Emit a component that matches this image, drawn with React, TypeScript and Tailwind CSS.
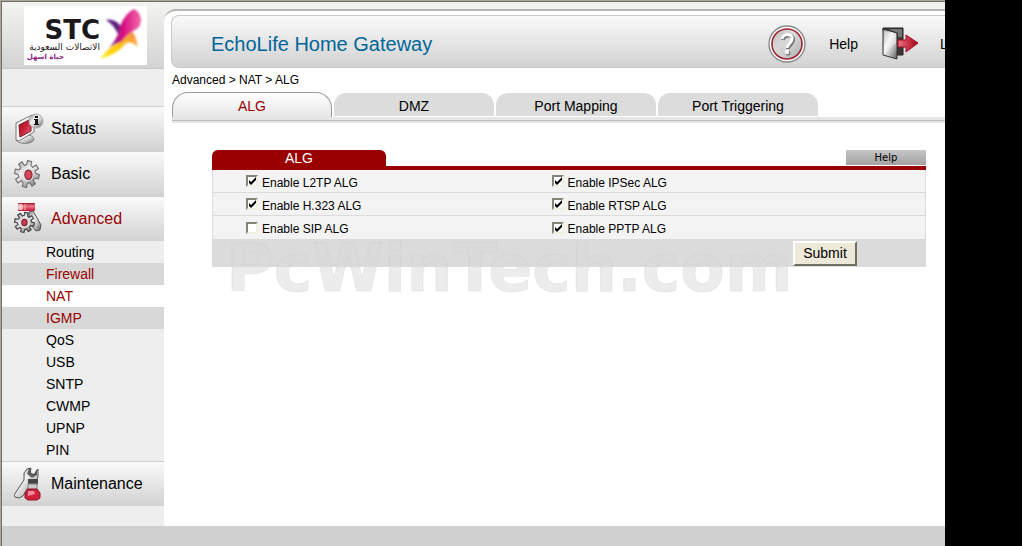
import { ReactNode } from "react";
import clsx from "clsx";


const subItems = [
  { name: "Routing" },
  { name: "Firewall", style: "bg-[#d8d8d8] text-[#990000]" },
  { name: "NAT", style: "bg-white text-[#990000]" },
  { name: "IGMP", style: "bg-[#d8d8d8] text-[#990000]" },
  { name: "QoS" },
  { name: "USB" },
  { name: "SNTP" },
  { name: "CWMP" },
  { name: "UPNP" },
  { name: "PIN" }
];

const tabs = ["DMZ", "Port Mapping", "Port Triggering"];

const algRows = [
  [{ name: "L2TP", on: true }, { name: "IPSec", on: true }],
  [{ name: "H.323", on: true }, { name: "RTSP", on: true }],
  [{ name: "SIP", on: false }, { name: "PPTP", on: true }]
];

const GEAR = "M30 15 35 15 35 21 30 21 28 24 32 28 28 32 24 28 21 30 21 35 15 35 15 30 12 28 8 32 4 28 8 24 6 21 1 21 1 15 6 15 8 12 4 8 8 4 12 8 15 6 15 1 21 1 21 6 24 8 28 4 32 8 28 12z";


// shared metal / red shading used by all of the icons
function Gradients() {
  return (
    <svg width="0" height="0" className="absolute" aria-hidden="true">
      <defs>
        <linearGradient id="metal" x1="0" y1="0" x2="1" y2="1">
          <stop offset="0" stopColor="#8e8e8e" />
          <stop offset="0.4" stopColor="#f2f2f2" />
          <stop offset="0.65" stopColor="#c2c2c2" />
          <stop offset="1" stopColor="#5a5a5a" />
        </linearGradient>
        <linearGradient id="ruby" x1="0" y1="0" x2="1" y2="1">
          <stop offset="0" stopColor="#8f0d1c" />
          <stop offset="0.55" stopColor="#d0263f" />
          <stop offset="1" stopColor="#ee8594" />
        </linearGradient>
        <linearGradient id="tube" x1="0" y1="0" x2="0" y2="1">
          <stop offset="0" stopColor="#a01525" />
          <stop offset="0.4" stopColor="#f0798c" />
          <stop offset="1" stopColor="#c4112d" />
        </linearGradient>
        <linearGradient id="arrow" x1="0" y1="0" x2="1" y2="0">
          <stop offset="0" stopColor="#ee6f84" />
          <stop offset="1" stopColor="#a40012" />
        </linearGradient>
        <linearGradient id="wing" x1="0" y1="0" x2="1" y2="0">
          <stop offset="0" stopColor="#5b2382" />
          <stop offset="0.5" stopColor="#d80f83" />
          <stop offset="1" stopColor="#f06aa8" />
        </linearGradient>
        <linearGradient id="tail" x1="0" y1="1" x2="1" y2="0">
          <stop offset="0" stopColor="#ffee20" />
          <stop offset="0.5" stopColor="#fdc30c" />
          <stop offset="1" stopColor="#f58a5c" />
        </linearGradient>
        <filter id="soft"><feGaussianBlur stdDeviation="1.1" /></filter>
      </defs>
    </svg>
  );
}

function StatusIcon() {
  return (
    <svg width="30" height="32" viewBox="0 0 30 32" aria-hidden="true">
      <ellipse cx="11" cy="26" rx="9" ry="4.5" fill="url(#metal)" stroke="#888" />
      <path d="M2 10 18 2l2 1v16L5 28l-3-1z" fill="#f4f4f4" stroke="#777" />
      <path d="M5 12 17 6v12L6 24z" fill="url(#ruby)" stroke="#7d1420" />
      <circle cx="22" cy="8" r="7" fill="url(#metal)" stroke="#aaa" />
      <path d="M21 3h3v2h-3zM20 6h4v5h1v1h-5v-1h1V7h-1z" fill="#151515" />
    </svg>
  );
}

function BasicIcon() {
  return (
    <svg width="26" height="28" viewBox="0 0 36 36" preserveAspectRatio="none" aria-hidden="true">
      <path d={GEAR} fill="url(#metal)" stroke="#707070" strokeWidth="1.5" strokeLinejoin="round" transform="rotate(12 18 18)" />
      <circle cx="19" cy="19" r="8" fill="#e4e4e4" />
      <ellipse cx="20" cy="19" rx="5" ry="6" fill="#d7485a" stroke="#7c2430" strokeWidth="1.5" />
    </svg>
  );
}

function AdvancedIcon() {
  return (
    <svg width="28" height="32" viewBox="0 0 28 32" aria-hidden="true">
      <path d="m15 9 4-1 4 7 4 7-1 5-4 1-4-5-3-7z" fill="url(#metal)" stroke="#555" />
      <g transform="translate(0 9) scale(.58)">
        <path d={GEAR} fill="url(#metal)" stroke="#444" strokeWidth="2" strokeLinejoin="round" transform="rotate(12 18 18)" />
        <circle cx="18" cy="18" r="9" fill="#ddd" />
        <ellipse cx="18" cy="18" rx="4.5" ry="5.5" fill="#cf3a4e" stroke="#7c2430" strokeWidth="2" />
      </g>
      <rect x="4" y="0" width="17" height="8" rx="1" fill="url(#tube)" />
      <rect x="4" y="1" width="5" height="6" rx="2" fill="#f9c3cc" />
      <path d="M11 1v6" stroke="#f6b4be" />
    </svg>
  );
}

function MaintenanceIcon() {
  return (
    <svg width="28" height="34" viewBox="2 0 28 34" aria-hidden="true">
      <path d="m2 28 10-15V6l3-4 4-1-1 5 4 2 4-6v8l-3 6-5 1-7 12-4 2-4-1z" fill="url(#metal)" stroke="#555" />
      <path d="m17 1 2 1v4l3 1 3-5v6l-5 3-5-4z" fill="#444" opacity=".8" />
      <path d="M16 12h10v5l-2 2h-6l-2-2z" fill="#444" />
      <rect x="16" y="17" width="9" height="6" fill="#c9c9c9" stroke="#888" />
      <path d="M16 22h9l3 4v5l-3 2H16l-3-2v-5z" fill="#d0203c" stroke="#8d1424" />
      <path d="M16 24h6l1 3-7 2z" fill="#f08c9c" />
    </svg>
  );
}

function HelpIcon() {
  return (
    <svg width="38" height="38" viewBox="0 0 38 38" aria-hidden="true">
      <circle cx="19" cy="19" r="18" fill="#fff" stroke="#8a8a8a" strokeWidth="1.4" />
      <circle cx="19" cy="19" r="15" fill="url(#metal)" stroke="#a3242d" strokeWidth="1.6" />
      <circle cx="19" cy="19" r="14" fill="#cecece" opacity=".7" />
      <path d="M14 14c1-6 11-6 10 0 0 4-5 5-5 9" fill="none" stroke="#777" strokeWidth="4" transform="translate(1 1)" />
      <path d="M14 14c1-6 11-6 10 0 0 4-5 5-5 9" fill="none" stroke="#fff" strokeWidth="3" />
      <circle cx="20" cy="28" r="2.5" fill="#777" />
      <circle cx="19" cy="27" r="2.2" fill="#fff" />
    </svg>
  );
}

function LogoutIcon() {
  return (
    <svg width="37" height="33" viewBox="0 0 37 33" aria-hidden="true">
      <path d="M1 1h20v27h-8V8L1 4z" fill="#3a3536" stroke="#222" />
      <path d="M6 2h14v8h-4V6z" fill="#777" />
      <path d="m1 2 14 4v26L1 28z" fill="url(#metal)" stroke="#333" />
      <path d="m2 4 12 4v8L2 27z" fill="#fff" opacity=".4" />
      <path d="M16 13h8V8l12 8-12 9v-5h-8z" fill="url(#arrow)" stroke="#a31022" />
    </svg>
  );
}

function Logo() {
  return (
    <div className="ml-[22px] mt-1 flex h-[59px] w-[123px] bg-white">
      <div className="flex w-[76px] shrink-0 flex-col items-end pt-[13px] font-['DejaVu_Sans'] text-[#1c1718]">
        <div className="text-[26px]/[22px] font-bold">STC</div>
        <div dir="rtl" lang="ar" className="mt-px whitespace-nowrap text-[9px]/[10px]">الاتصالات السعودية</div>
        <div dir="rtl" lang="ar" className="mr-9 mt-px whitespace-nowrap text-[7px]/[8px] font-bold text-[#8a2383]">حياة اسهل</div>
      </div>
      <svg width="46" height="59" viewBox="0 0 46 59" aria-hidden="true">
        <g filter="url(#soft)">
          <path d="M6 14c5-2 14 2 17 10l-2 12C18 26 14 19 6 14z" fill="#5b2382" />
          <path d="M20 21c3-9 8-15 14-18 7 3 9 12 5 18-5 4-10 5-15 15-7 1-13 3-19 10 7-7 13-14 15-25z" fill="url(#wing)" />
          <path d="M0 53c6-7 11-14 21-17 4-4 7-9 11-10 3 1 4 8 6 15-4-4-8-6-13-3-6 8-15 12-25 15z" fill="url(#tail)" />
        </g>
      </svg>
    </div>
  );
}

function MenuItem({ icon, name, active }: { icon: ReactNode; name: string; active?: boolean }) {
  return (
    <a href="#" className={clsx("flex h-[45px] items-center border-t border-[#cfcfcf] bg-linear-to-b from-[#fafafa] to-[#d2d2d2] text-base", active && "text-[#990000]")}>
      <span className="w-[49px] shrink-0 pl-3">{icon}</span>
      {name}
    </a>
  );
}

function Checkbox({ name, on }: { name: string; on: boolean }) {
  return (
    <label className="flex items-center gap-1">
      <span className="grid size-3">
        <input
          type="checkbox"
          defaultChecked={on}
          className="peer col-start-1 row-start-1 size-3 appearance-none border-2 border-b-[#f1efe2] border-l-[#85827a] border-r-[#f1efe2] border-t-[#85827a] bg-white"
        />
        <svg viewBox="0 0 12 12" className="pointer-events-none invisible col-start-1 row-start-1 size-3 peer-checked:visible">
          <path d="M3 5v3l2 2 5-5V2L5 7z" fill="#000" />
        </svg>
      </span>
      <span className="pt-[3px]">Enable {name} ALG</span>
    </label>
  );
}

function Sidebar() {
  return (
    <nav className="w-[162px] shrink-0 bg-[#eeeeee]">
      <div className="h-[67px] overflow-hidden border-b border-[#c8c8c8] bg-linear-to-b from-[#f3f3f1] to-[#d3d3d3]">
        <Logo />
      </div>
      <div className="mt-[37px]">
        <MenuItem icon={<StatusIcon />} name="Status" />
        <MenuItem icon={<BasicIcon />} name="Basic" />
        <MenuItem icon={<AdvancedIcon />} name="Advanced" active />
        <ul className="text-sm">
          {subItems.map((item) => (
            <li key={item.name}>
              <a href="#" className={clsx("block h-[22px] pl-11 leading-[22px]", item.style)}>{item.name}</a>
            </li>
          ))}
        </ul>
        <MenuItem icon={<MaintenanceIcon />} name="Maintenance" />
      </div>
    </nav>
  );
}

function Header() {
  return (
    <header className="ml-[7px] flex h-[53px] items-center rounded-l-lg border-y border-l border-[#c9c9c9] bg-linear-to-b from-[#fafafa] to-[#d2d2d2] pt-1 text-sm">
      <h1 className="flex-1 pl-[39px] text-xl text-[#006699]">EchoLife Home Gateway</h1>
      <a href="#" className="flex items-center gap-[23px]"><HelpIcon />Help</a>
      <a href="#" className="ml-6 flex w-[63px] items-center gap-[21px] overflow-hidden">
        <span className="shrink-0"><LogoutIcon /></span>
        Logout
      </a>
    </header>
  );
}

function AlgForm() {
  return (
    <form className="relative ml-12 mr-[19px] mt-[27px] text-xs">
      <div className="flex items-start justify-between border-b-4 border-[#990000]">
        <h2 className="h-4 w-[174px] rounded-t-md bg-[#990000] text-center text-sm/[16px] text-white">ALG</h2>
        <button type="button" className="h-[15px] w-20 bg-linear-to-b from-[#c6c6c6] to-[#a2a2a2] font-['DejaVu_Sans'] text-[10px]/[15px]">Help</button>
      </div>
      <div className="divide-y divide-[#dbdbdb] border-x border-[#dbdbdb] bg-[#f3f3f3]">
        {algRows.map((row) => (
          <div key={row[0].name} className="grid h-[23px] grid-cols-[9fr_11fr] items-center pl-[33px]">
            {row.map((item) => <Checkbox key={item.name} {...item} />)}
          </div>
        ))}
      </div>
      <div className="flex h-7 items-center justify-end bg-[#dbdbdb] pr-[69px]">
        <button type="button" className="h-[25px] w-16 border-2 border-b-[#716f64] border-l-white border-r-[#716f64] border-t-white bg-[#ece9d8] text-sm/[20px]">Submit</button>
      </div>
      <div className="pointer-events-none absolute left-3.5 top-[77px] whitespace-nowrap font-['DejaVu_Sans'] text-[65px]/[84px] font-bold text-[#dadada]/50 [-webkit-text-stroke:1px_#c8c8c840]">
        PcWinTech.com
      </div>
    </form>
  );
}

export default function App() {
  return (
    <div className="flex min-h-screen bg-black font-['Liberation_Sans',Arial,sans-serif] text-black">
      <Gradients />
      <div className="flex min-w-0 flex-1 border-l border-t border-[#aca899]">
        <div className="flex min-w-0 flex-1 flex-col border-l border-t border-[#716f64]">
          <div className="flex flex-1">
            <Sidebar />
            <div className="flex min-w-0 flex-1 flex-col bg-[#f0f0ed] pt-[7px]">
              <main className="flex-1 rounded-tl-xl border-t-2 border-[#b5b5b5] bg-white pt-1">
                <Header />
                <div className="pl-2 pt-1 text-xs">Advanced &gt; NAT &gt; ALG</div>
                <nav className="ml-2 mt-1 flex items-end gap-0.5 text-center text-sm">
                  <a href="#" className="h-[25px] w-40 rounded-t-2xl border border-b-0 border-[#999999] bg-linear-to-b from-white to-[#e6e6e6] pt-[3px] text-[#990000]">ALG</a>
                  {tabs.map((tab) => (
                    <a key={tab} href="#" className="mb-px h-[23px] w-40 rounded-t-xl bg-[#dcdcdc] pt-[3px]">{tab}</a>
                  ))}
                </nav>
                <div className="ml-2 border-b-2 border-t-3 border-[#e6e6e6]">
                  <div className="h-px bg-[#bcbcbc]" />
                </div>
                <AlgForm />
              </main>
            </div>
          </div>
          <footer className="h-5 bg-[#d0d0d0]" />
        </div>
      </div>
      <div className="w-[77px] shrink-0" />
    </div>
  );
}
